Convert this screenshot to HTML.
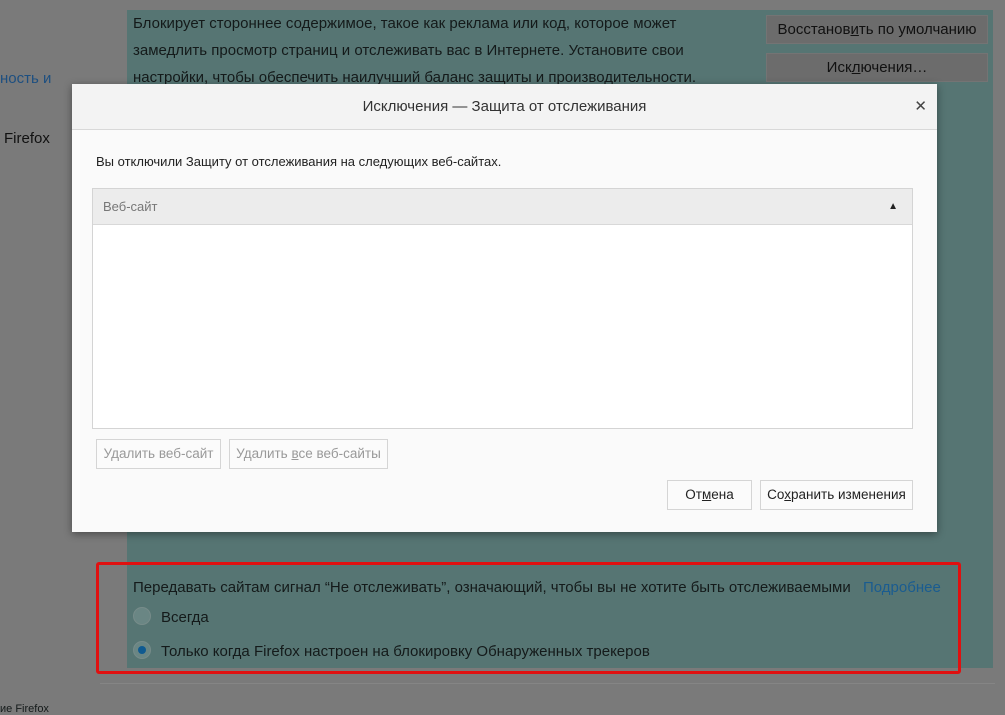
<!DOCTYPE html>
<html><head><meta charset="utf-8"><style>
*{box-sizing:border-box;margin:0;padding:0}
body{width:1005px;height:711px;overflow:hidden;background:#7a7a7a;font-family:"Liberation Sans",sans-serif;position:relative;color:#111}
.abs{position:absolute}
.teal{left:127px;top:10px;width:866px;height:658px;background:#567573}
.t{font-size:15px;color:#141a1a;white-space:nowrap}
.btn{background:#6c6c6c;border:1px solid #747474;font-size:15px;color:#111;text-align:center;line-height:28px}
.dlg{left:72px;top:84px;width:865px;height:448px;background:#fafafa;box-shadow:0 2px 8px rgba(0,0,0,.4)}
.title{left:0;top:0;width:865px;height:46px;background:#f3f3f3;border-bottom:1px solid #d8d8d8;text-align:center;line-height:46px;font-size:15px;color:#333}
.dbtn{background:#fbfbfb;border:1px solid #d5d5d5;font-size:13.5px;color:#222;text-align:center;line-height:28px}
.radio{width:18px;height:18px;border-radius:50%;background:#6a8684;border:1px solid #778c8a}
</style></head><body>
<div class="abs t" style="left:0;top:70px;color:#1d4f80">ность и</div>
<div class="abs t" style="left:4px;top:130px;color:#111">Firefox</div>
<div class="abs t" style="left:0;top:703px;font-size:11px">ие Firefox</div>
<div class="abs teal"></div>
<div class="abs t" style="left:133px;top:15px">Блокирует стороннее содержимое, такое как реклама или код, которое может</div>
<div class="abs t" style="left:133px;top:42px">замедлить просмотр страниц и отслеживать вас в Интернете. Установите свои</div>
<div class="abs t" style="left:133px;top:69px">настройки, чтобы обеспечить наилучший баланс защиты и производительности.</div>
<div class="abs btn" style="left:766px;top:15px;width:222px;height:29px">Восстанов<u>и</u>ть по умолчанию</div>
<div class="abs btn" style="left:766px;top:53px;width:222px;height:29px">Иск<u>л</u>ючения…</div>

<div class="abs dlg">
 <div class="abs title">Исключения — Защита от отслеживания<span class="abs" style="right:10px;top:0;font-size:15px;color:#444">✕</span></div>
 <div class="abs" style="left:24px;top:70px;font-size:13px;color:#222">Вы отключили Защиту от отслеживания на следующих веб-сайтах.</div>
 <div class="abs" style="left:20px;top:104px;width:821px;height:241px;background:#fff;border:1px solid #d4d4d4">
  <div style="height:36px;background:#ececec;border-bottom:1px solid #d8d8d8;font-size:13px;color:#777;line-height:36px;padding-left:10px;position:relative">Веб-сайт<span style="position:absolute;right:14px;top:0;font-size:10px;color:#222">▲</span></div>
 </div>
 <div class="abs dbtn" style="left:24px;top:355px;width:125px;height:30px;color:#999">Удалить веб-сайт</div>
 <div class="abs dbtn" style="left:157px;top:355px;width:159px;height:30px;color:#999">Удалить <u>в</u>се веб-сайты</div>
 <div class="abs dbtn" style="left:595px;top:396px;width:85px;height:30px">От<u>м</u>ена</div>
 <div class="abs dbtn" style="left:688px;top:396px;width:153px;height:30px">Со<u>х</u>ранить изменения</div>
</div>

<div class="abs" style="left:96px;top:562px;width:865px;height:112px;border:3px solid #e01010;border-radius:3px"></div>
<div class="abs t" style="left:133px;top:579px">Передавать сайтам сигнал “Не отслеживать”, означающий, чтобы вы не хотите быть отслеживаемыми</div>
<div class="abs t" style="left:863px;top:579px;color:#1a5c90">Подробнее</div>
<div class="abs radio" style="left:133px;top:607px"></div>
<div class="abs t" style="left:161px;top:609px">Всегда</div>
<div class="abs radio" style="left:133px;top:641px"><div style="width:8px;height:8px;border-radius:50%;background:#0f5a90;margin:4px"></div></div>
<div class="abs t" style="left:161px;top:643px">Только когда Firefox настроен на блокировку Обнаруженных трекеров</div>
<div class="abs" style="left:100px;top:683px;width:895px;height:1px;background:#858585"></div>
</body></html>
